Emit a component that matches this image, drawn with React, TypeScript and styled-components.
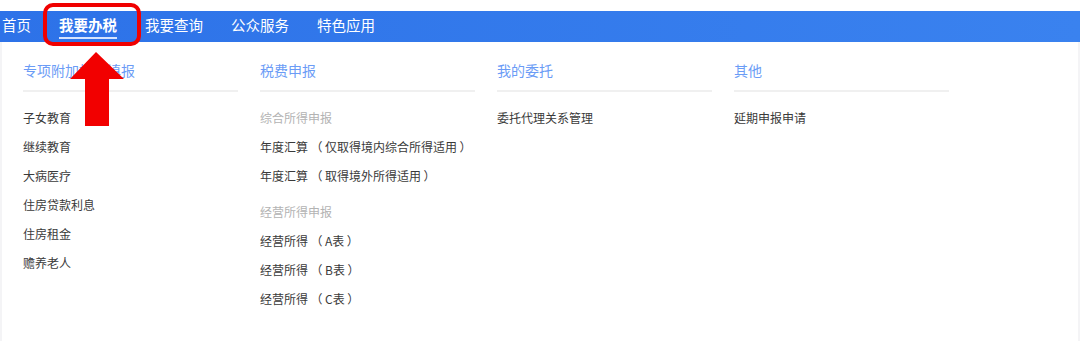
import styled, { createGlobalStyle } from 'styled-components';

const GlobalStyle = createGlobalStyle`
  html, body {
    margin: 0;
    padding: 0;
    background: #ffffff;
  }
  body {
    font-family: "Noto Sans CJK SC", "Noto Sans", sans-serif;
    text-spacing-trim: space-all;
  }
`;

const Page = styled.div`
  position: relative;
  width: 1080px;
  height: 341px;
  overflow: hidden;
  background: #fff;
  padding-top: 11px;
  box-sizing: border-box;
`;

const NavBar = styled.nav`
  display: flex;
  align-items: center;
  gap: 28px;
  height: 31px;
  padding-left: 2px;
  background: linear-gradient(90deg, #2d72e8 0%, #3a82ef 100%);
`;

const NavItem = styled.div<{ $active?: boolean }>`
  position: relative;
  height: 31px;
  line-height: 27px;
  font-size: 14.5px;
  color: #fff;
  font-weight: ${(p) => (p.$active ? 700 : 400)};
  white-space: nowrap;

  &::after {
    content: '';
    display: ${(p) => (p.$active ? 'block' : 'none')};
    position: absolute;
    left: 0;
    right: 0;
    bottom: 3px;
    height: 2px;
    background: #d6e4ff;
  }
`;

const Panel = styled.div`
  display: grid;
  grid-template-columns: repeat(4, 215px);
  column-gap: 22px;
  padding: 18px 0 0 21px;
  height: 299px;
  box-sizing: border-box;
  border-left: 2px solid #f4f4f6;
  border-right: 2px solid #f4f4f6;
`;

const Column = styled.div`
  display: flex;
  flex-direction: column;
`;

const ColumnTitle = styled.div`
  font-size: 14px;
  line-height: 20px;
  color: #6b9cf6;
  padding-bottom: 10px;
  border-bottom: 2px solid #f0f0f0;
  margin-bottom: 11px;
`;

const Item = styled.div<{ $muted?: boolean; $gapTop?: boolean }>`
  font-size: 12px;
  line-height: 29px;
  height: 29px;
  color: ${(p) => (p.$muted ? '#b3b3b3' : '#3a3a3a')};
  margin-top: ${(p) => (p.$gapTop ? '7px' : '0')};
  white-space: nowrap;
`;

const Paren = styled.span`
  display: inline-block;
  width: 17px;
  text-align: center;
`;

const Highlight = styled.div`
  position: absolute;
  left: 43px;
  top: 3px;
  width: 98px;
  height: 43px;
  box-sizing: border-box;
  border: 4px solid #f00000;
  border-radius: 10px;
`;

const Arrow = styled.svg`
  position: absolute;
  left: 70px;
  top: 52px;
`;

type Entry = { label: string; note?: string; muted?: boolean; gapTop?: boolean };

const columns: { title: string; items: Entry[] }[] = [
  {
    title: '专项附加扣除填报',
    items: [
      { label: '子女教育' },
      { label: '继续教育' },
      { label: '大病医疗' },
      { label: '住房贷款利息' },
      { label: '住房租金' },
      { label: '赡养老人' },
    ],
  },
  {
    title: '税费申报',
    items: [
      { label: '综合所得申报', muted: true },
      { label: '年度汇算', note: '仅取得境内综合所得适用' },
      { label: '年度汇算', note: '取得境外所得适用' },
      { label: '经营所得申报', muted: true, gapTop: true },
      { label: '经营所得', note: 'A表' },
      { label: '经营所得', note: 'B表' },
      { label: '经营所得', note: 'C表' },
    ],
  },
  {
    title: '我的委托',
    items: [{ label: '委托代理关系管理' }],
  },
  {
    title: '其他',
    items: [{ label: '延期申报申请' }],
  },
];

const navItems = ['首页', '我要办税', '我要查询', '公众服务', '特色应用'];

function App() {
  return (
    <Page>
      <GlobalStyle />
      <NavBar>
        {navItems.map((name) => (
          <NavItem key={name} $active={name === '我要办税'}>
            {name}
          </NavItem>
        ))}
      </NavBar>
      <Panel>
        {columns.map((col) => (
          <Column key={col.title}>
            <ColumnTitle>{col.title}</ColumnTitle>
            {col.items.map((it, i) => (
              <Item key={i} $muted={it.muted} $gapTop={it.gapTop}>
                {it.label}
                {it.note && (
                  <>
                    <Paren>（</Paren>
                    {it.note}
                    <Paren>）</Paren>
                  </>
                )}
              </Item>
            ))}
          </Column>
        ))}
      </Panel>
      <Highlight />
      <Arrow width="54" height="74" viewBox="0 0 54 74">
        <polygon points="26,0 54,27 39,27 39,74 15,74 15,27 0,27" fill="#f20000" />
      </Arrow>
    </Page>
  );
}

export default App;
